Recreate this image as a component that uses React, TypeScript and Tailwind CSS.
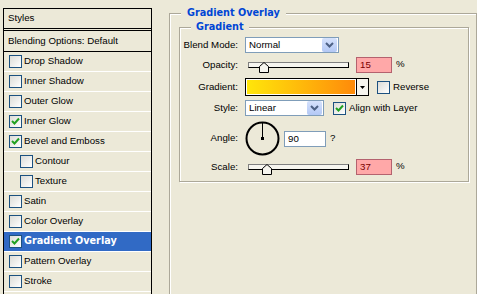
import React from "react";

const items = [
  { label: "Drop Shadow", on: false, sub: false },
  { label: "Inner Shadow", on: false, sub: false },
  { label: "Outer Glow", on: false, sub: false },
  { label: "Inner Glow", on: true, sub: false },
  { label: "Bevel and Emboss", on: true, sub: false },
  { label: "Contour", on: false, sub: true },
  { label: "Texture", on: false, sub: true },
  { label: "Satin", on: false, sub: false },
  { label: "Color Overlay", on: false, sub: false },
  { label: "Gradient Overlay", on: true, sub: false, active: true },
  { label: "Pattern Overlay", on: false, sub: false },
  { label: "Stroke", on: false, sub: false },
  { label: "", on: false, sub: false, blank: true },
];

function Check({ on }: { on: boolean }) {
  return (
    <div className="w-[13px] h-[13px] shrink-0 border border-[#1C5180] bg-gradient-to-br from-[#DCDCD7] to-white flex items-center justify-center">
      {on && (
        <svg width="11" height="11" viewBox="0 0 11 11">
          <path d="M2 5 L4.5 7.5 L9 2.5" fill="none" stroke="#21A121" strokeWidth="2" />
        </svg>
      )}
    </div>
  );
}

function DropButton() {
  return (
    <div className="w-[15px] h-[14px] rounded-[2px] bg-gradient-to-b from-[#D6E2FC] to-[#B3C8F5] flex items-center justify-center">
      <svg width="9" height="6" viewBox="0 0 9 6">
        <path d="M1 1 L4.5 4.5 L8 1" fill="none" stroke="#4D6185" strokeWidth="2" />
      </svg>
    </div>
  );
}

function Slider({ thumb }: { thumb: string }) {
  return (
    <div className="relative w-[101px] h-[11px] mt-[5px]">
      <div className="h-[6px] border border-black border-t-[#808080] border-l-[#808080] bg-[#F6F5EF]" />
      <svg className={`absolute top-0 ${thumb}`} width="10" height="11" viewBox="0 0 10 11">
        <path d="M0.5 10.5 V4.5 L5 0.5 L9.5 4.5 V10.5 Z" fill="#F6F5EF" stroke="black" />
      </svg>
    </div>
  );
}

function PinkInput({ value }: { value: string }) {
  return (
    <div className="w-[36px] h-[16px] border border-[#B4626E] bg-[#FFA8A8] text-[#7A0000] pl-[3px] leading-[14px]">
      {value}
    </div>
  );
}

function Label({ children }: { children: React.ReactNode }) {
  return <div className="w-[58px] text-right shrink-0">{children}</div>;
}

export default function App() {
  return (
    <div className="w-[477px] h-[294px] overflow-hidden bg-[#ECE9D8] flex items-start font-['Liberation_Sans',Arial,sans-serif] text-[9.7px] text-black">
      {/* styles list */}
      <div className="ml-[3px] mt-[8px] w-[149px] shrink-0 border-l border-t border-r border-black flex flex-col">
        <div className="h-[20px] pl-[4px] flex items-center border-b border-black">Styles</div>
        <div className="h-[22px] mt-[1px] pl-[4px] flex items-center border-t border-b border-black">
          Blending Options: Default
        </div>
        {items.map((it, i) => (
          <div
            key={i}
            className={`h-[20px] flex items-center gap-[1px] border-b border-white ${
              it.sub ? "pl-[16px]" : "pl-[5px]"
            } ${it.active ? "bg-[#316AC5] text-white" : ""}`}
          >
            {!it.blank && <Check on={it.on} />}
            <span
              className={
                it.active
                  ? "font-['DejaVu_Sans',Verdana,sans-serif] font-bold text-[9.7px] pl-[1px]"
                  : "pl-[1px]"
              }
            >
              {it.label}
            </span>
          </div>
        ))}
      </div>

      {/* outer group */}
      <div className="relative ml-[17px] mt-[13px] w-[320px] h-[300px] border border-[#ACA899] shadow-[inset_1px_1px_0_#fff,1px_1px_0_#fff]">
        <div className="absolute left-[11px] -top-[8px] px-[6px] bg-[#ECE9D8] font-['DejaVu_Sans',Verdana,sans-serif] font-bold text-[9.7px] text-[#0046D5] leading-[14px]">
          Gradient Overlay
        </div>

        {/* inner group */}
        <div className="relative ml-[9px] mt-[13px] w-[290px] h-[155px] border border-[#ACA899] shadow-[inset_1px_1px_0_#fff,1px_1px_0_#fff] flex flex-col">
          <div className="absolute left-[11px] -top-[8px] px-[5px] bg-[#ECE9D8] font-['DejaVu_Sans',Verdana,sans-serif] font-bold text-[9.7px] text-[#0046D5] leading-[14px]">
            Gradient
          </div>

          {/* Blend mode */}
          <div className="mt-[9px] h-[16px] flex items-center">
            <Label>Blend Mode:</Label>
            <div className="ml-[7px] w-[94px] h-[16px] border border-[#7F9DB9] bg-white flex items-center justify-between pl-[3px] pr-[1px]">
              <span>Normal</span>
              <DropButton />
            </div>
          </div>

          {/* Opacity */}
          <div className="mt-[4px] h-[16px] flex items-start">
            <Label><span className="leading-[16px]">Opacity:</span></Label>
            <div className="ml-[10px]">
              <Slider thumb="left-[11px]" />
            </div>
            <div className="ml-[7px]"><PinkInput value="15" /></div>
            <span className="ml-[4px] leading-[14px]">%</span>
          </div>

          {/* Gradient */}
          <div className="mt-[5px] h-[18px] flex items-center">
            <Label>Gradient:</Label>
            <div className="ml-[7px] w-[124px] h-[18px] border border-black flex">
              <div className="flex-1 border border-white bg-gradient-to-r from-[#FFE60A] to-[#FF8A0A]" />
              <div className="w-[12px] border-l border-black bg-[#F6F5EF] flex items-center justify-center">
                <svg width="5" height="3" viewBox="0 0 5 3">
                  <path d="M0 0 H5 L2.5 3 Z" fill="black" />
                </svg>
              </div>
            </div>
            <div className="ml-[8px]"><Check on={false} /></div>
            <span className="ml-[3px]">Reverse</span>
          </div>

          {/* Style */}
          <div className="mt-[4px] h-[16px] flex items-center">
            <Label>Style:</Label>
            <div className="ml-[7px] w-[79px] h-[16px] border border-[#7F9DB9] bg-white flex items-center justify-between pl-[3px] pr-[1px]">
              <span>Linear</span>
              <DropButton />
            </div>
            <div className="ml-[9px]"><Check on={true} /></div>
            <span className="ml-[3px]">Align with Layer</span>
          </div>

          {/* Angle */}
          <div className="mt-[5px] h-[35px] flex items-center">
            <Label>Angle:</Label>
            <svg className="ml-[7px]" width="35" height="35" viewBox="0 0 35 35">
              <circle cx="17.5" cy="17.5" r="16" fill="none" stroke="black" strokeWidth="2" />
              <line x1="17.5" y1="2" x2="17.5" y2="17.5" stroke="black" strokeWidth="1" />
              <rect x="16" y="16" width="3" height="3" fill="black" />
            </svg>
            <div className="ml-[4px] w-[42px] h-[16px] border border-[#7F9DB9] bg-white pl-[3px] leading-[14px]">90</div>
            <span className="ml-[4px]">?</span>
          </div>

          {/* Scale */}
          <div className="mt-[3px] h-[16px] flex items-start">
            <Label><span className="leading-[16px]">Scale:</span></Label>
            <div className="ml-[10px]">
              <Slider thumb="left-[14px]" />
            </div>
            <div className="ml-[7px]"><PinkInput value="37" /></div>
            <span className="ml-[4px] leading-[14px]">%</span>
          </div>
        </div>
      </div>
    </div>
  );
}
